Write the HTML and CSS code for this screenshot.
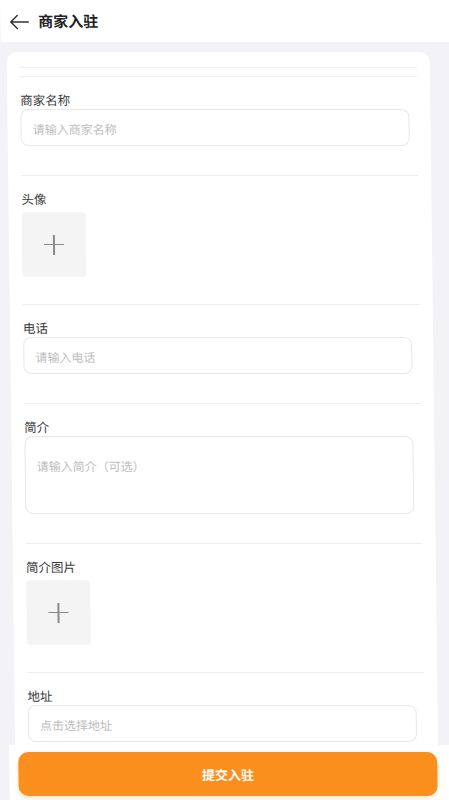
FILE: index.html
```html
<!DOCTYPE html>
<html lang="zh-CN">
<head>
<meta charset="utf-8">
<title>商家入驻</title>
<link rel="stylesheet" href="styles.css">
</head>
<body>
<div class="app">
  <header class="topbar">
    <svg class="back" width="20" height="16" viewBox="0 0 20 16" fill="none" stroke="#333" stroke-width="1.5" stroke-linecap="round" stroke-linejoin="round">
      <path d="M19 8H1.5M8 1.5L1.5 8L8 14.5"/>
    </svg>
    <h1 class="title">商家入驻</h1>
  </header>
  <main class="content">
    <section class="card">
      <div class="divider"></div>
      <div class="blank"></div>
      <div class="field">
        <div class="label">商家名称</div>
        <div class="input"><span class="ph">请输入商家名称</span></div>
      </div>
      <div class="field field-upload">
        <div class="label">头像</div>
        <div class="upload"><span class="plus"></span></div>
      </div>
      <div class="field">
        <div class="label">电话</div>
        <div class="input"><span class="ph">请输入电话</span></div>
      </div>
      <div class="field">
        <div class="label">简介</div>
        <div class="textarea"><span class="ph">请输入简介（可选）</span></div>
      </div>
      <div class="field field-upload">
        <div class="label">简介图片</div>
        <div class="upload"><span class="plus"></span></div>
      </div>
      <div class="field">
        <div class="label">地址</div>
        <div class="input"><span class="ph">点击选择地址</span></div>
      </div>
    </section>
  </main>
  <footer class="bottombar">
    <button class="submit">提交入驻</button>
  </footer>
</div>
</body>
</html>
```

FILE: styles.css
```css
html, body {
  margin: 0;
  padding: 0;
  background: #f3f3f7;
  overflow: hidden;
}
body {
  font-family: "Noto Sans CJK SC", "Noto Sans", sans-serif;
  color: #333;
}
.app {
  width: 449px;
  height: 800px;
  overflow: hidden;
  display: flex;
  flex-direction: column;
  background: #f3f3f7;
  transform-origin: 0 0;
  transform: skewX(0.7deg);
}
.topbar {
  height: 42px;
  flex: 0 0 42px;
  background: #fff;
  display: flex;
  align-items: center;
  padding-left: 9px;
  box-sizing: border-box;
}
.back {
  display: block;
  margin-top: 1px;
}
.title {
  margin: 0 0 0 9px;
  font-size: 15px;
  font-weight: 700;
  color: #222;
  line-height: 20px;
}
.content {
  flex: 1;
  overflow: hidden;
  padding: 10px 20px 0 6px;
}
.card {
  background: #fff;
  border-radius: 10px 10px 0 0;
  padding: 15px 13px 0;
}
.divider {
  height: 1px;
  background: #ededed;
}
.blank {
  height: 8px;
}
.field {
  border-top: 1px solid #ededed;
  padding: 14px 0 29px;
}
.field-upload {
  padding-bottom: 27px;
}
.label {
  font-size: 12.5px;
  line-height: 18px;
  color: #3a3a3a;
}
.input {
  height: 37px;
  box-sizing: border-box;
  border: 1px solid #e8e8e8;
  border-radius: 8px;
  display: flex;
  align-items: center;
  padding: 3px 11px 0;
  margin-right: 8px;
}
.textarea {
  height: 78px;
  box-sizing: border-box;
  border: 1px solid #e8e8e8;
  border-radius: 8px;
  padding: 15px 11px 0;
  margin-right: 8px;
}
.ph {
  font-size: 12px;
  line-height: 18px;
  color: #bdbdbd;
}
.upload {
  margin-top: 4px;
  width: 64px;
  height: 65px;
  background: #f4f4f4;
  border-radius: 4px;
  display: flex;
  align-items: center;
  justify-content: center;
}
.plus {
  position: relative;
  width: 20px;
  height: 20px;
  display: block;
}
.plus::before, .plus::after {
  content: "";
  position: absolute;
  background: #8a8a8a;
}
.plus::before {
  left: 0;
  right: 0;
  top: 9.25px;
  height: 1.5px;
}
.plus::after {
  top: 0;
  bottom: 0;
  left: 9.25px;
  width: 1.5px;
}
.bottombar {
  flex: 0 0 55px;
  height: 55px;
  background: #fff;
  padding: 7px 21px 0 9px;
  box-sizing: border-box;
  box-shadow: -20px 0 0 #fff;
}
.submit {
  display: block;
  width: 100%;
  height: 44px;
  border: 0;
  border-radius: 10px;
  background: #fb8f1e;
  color: #fff;
  font-family: "Noto Sans CJK SC", "Noto Sans", sans-serif;
  font-size: 13px;
  font-weight: 700;
  box-shadow: 0 2px 4px rgba(251, 143, 30, 0.25);
}
```
